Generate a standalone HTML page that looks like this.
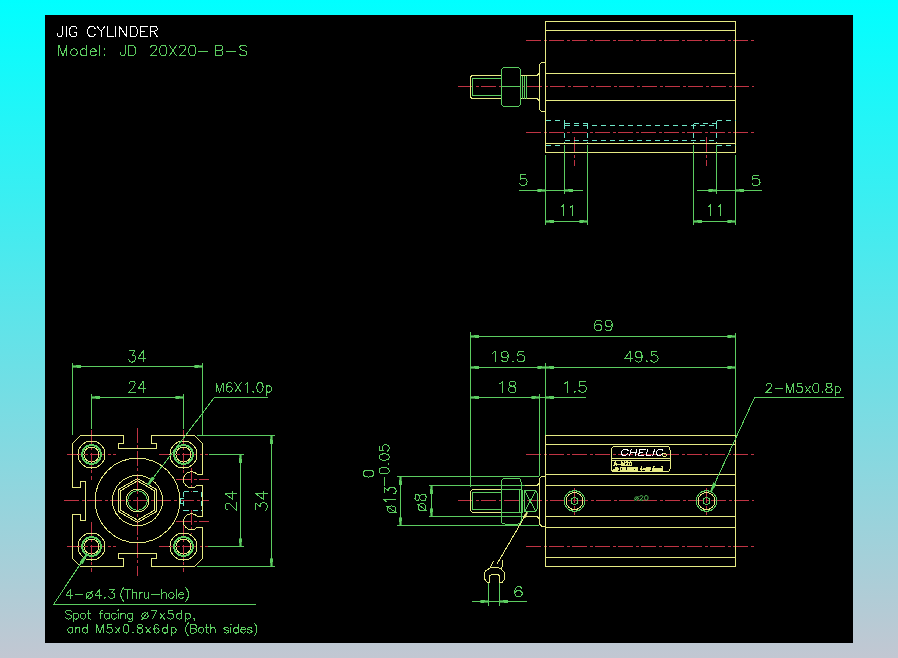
<!DOCTYPE html>
<html><head><meta charset="utf-8"><style>
html,body{margin:0;padding:0;width:898px;height:658px;overflow:hidden}
body{background:linear-gradient(to bottom,rgb(0,255,255) 0%,rgb(194,199,210) 100%)}
svg{position:absolute;left:0;top:0}
text{font-family:"Liberation Sans",sans-serif}
</style></head><body>
<svg width="898" height="658" viewBox="0 0 898 658" shape-rendering="crispEdges">
<rect x="45" y="15" width="808" height="628" fill="#000"/>
<line x1="526" y1="40.5" x2="754" y2="40.5" stroke="#c03444" stroke-dasharray="15 2.5 3 2.5" stroke-dashoffset="0"/>
<line x1="458" y1="86.5" x2="754" y2="86.5" stroke="#c03444" stroke-dasharray="15 2.5 3 2.5" stroke-dashoffset="0"/>
<line x1="526" y1="132.5" x2="754" y2="132.5" stroke="#c03444" stroke-dasharray="15 2.5 3 2.5" stroke-dashoffset="0"/>
<line x1="574.5" y1="137" x2="574.5" y2="166" stroke="#c03444" stroke-dasharray="15 2.5 3 2.5" stroke-dashoffset="0"/>
<line x1="706.5" y1="137" x2="706.5" y2="166" stroke="#c03444" stroke-dasharray="15 2.5 3 2.5" stroke-dashoffset="0"/>
<line x1="526" y1="454.5" x2="754" y2="454.5" stroke="#c03444" stroke-dasharray="15 2.5 3 2.5" stroke-dashoffset="0"/>
<line x1="458" y1="500.5" x2="754" y2="500.5" stroke="#c03444" stroke-dasharray="15 2.5 3 2.5" stroke-dashoffset="0"/>
<line x1="526" y1="546.5" x2="754" y2="546.5" stroke="#c03444" stroke-dasharray="15 2.5 3 2.5" stroke-dashoffset="0"/>
<line x1="574.5" y1="488" x2="574.5" y2="515" stroke="#c03444" stroke-dasharray="15 2.5 3 2.5" stroke-dashoffset="0"/>
<line x1="706.5" y1="488" x2="706.5" y2="515" stroke="#c03444" stroke-dasharray="15 2.5 3 2.5" stroke-dashoffset="0"/>
<line x1="67.0" y1="454.5" x2="116.0" y2="454.5" stroke="#c03444" stroke-dasharray="15 2.5 3 2.5" stroke-dashoffset="0"/>
<line x1="91.5" y1="429.5" x2="91.5" y2="479.5" stroke="#c03444" stroke-dasharray="15 2.5 3 2.5" stroke-dashoffset="0"/>
<line x1="159.0" y1="454.5" x2="208.0" y2="454.5" stroke="#c03444" stroke-dasharray="15 2.5 3 2.5" stroke-dashoffset="0"/>
<line x1="183.5" y1="429.5" x2="183.5" y2="479.5" stroke="#c03444" stroke-dasharray="15 2.5 3 2.5" stroke-dashoffset="0"/>
<line x1="67.0" y1="546.5" x2="116.0" y2="546.5" stroke="#c03444" stroke-dasharray="15 2.5 3 2.5" stroke-dashoffset="0"/>
<line x1="91.5" y1="521.5" x2="91.5" y2="571.5" stroke="#c03444" stroke-dasharray="15 2.5 3 2.5" stroke-dashoffset="0"/>
<line x1="159.0" y1="546.5" x2="208.0" y2="546.5" stroke="#c03444" stroke-dasharray="15 2.5 3 2.5" stroke-dashoffset="0"/>
<line x1="183.5" y1="521.5" x2="183.5" y2="571.5" stroke="#c03444" stroke-dasharray="15 2.5 3 2.5" stroke-dashoffset="0"/>
<line x1="64" y1="500.5" x2="209" y2="500.5" stroke="#c03444" stroke-dasharray="15 2.5 3 2.5" stroke-dashoffset="0"/>
<line x1="137.5" y1="427.7" x2="137.5" y2="575.5" stroke="#c03444" stroke-dasharray="15 2.5 3 2.5" stroke-dashoffset="0"/>
<line x1="176" y1="479.5" x2="209" y2="479.5" stroke="#c03444" stroke-dasharray="15 2.5 3 2.5" stroke-dashoffset="0"/>
<line x1="191.5" y1="467.5" x2="191.5" y2="491.5" stroke="#c03444" stroke-dasharray="15 2.5 3 2.5" stroke-dashoffset="0"/>
<line x1="176" y1="521.5" x2="209" y2="521.5" stroke="#c03444" stroke-dasharray="15 2.5 3 2.5" stroke-dashoffset="0"/>
<line x1="191.5" y1="509.5" x2="191.5" y2="533.5" stroke="#c03444" stroke-dasharray="15 2.5 3 2.5" stroke-dashoffset="0"/>
<path d="M545.5,21.5 H735.5 V152.5 H545.5 Z" stroke="#e6ea84" fill="none"/>
<line x1="545.5" y1="30.5" x2="735.5" y2="30.5" stroke="#e6ea84"/>
<line x1="545.5" y1="73.5" x2="735.5" y2="73.5" stroke="#e6ea84"/>
<line x1="545.5" y1="100.5" x2="735.5" y2="100.5" stroke="#e6ea84"/>
<line x1="545.5" y1="143.5" x2="735.5" y2="143.5" stroke="#e6ea84"/>
<path d="M545.5,62.5 H541.5 L539.5,64.5 V109.5 L541.5,111.5 H545.5" stroke="#e6ea84" fill="none"/>
<path d="M521,75.5 H537 L539.5,73" stroke="#e6ea84" fill="none"/>
<path d="M521,98.5 H537 L539.5,101" stroke="#e6ea84" fill="none"/>
<path d="M501,75.5 H472 L470.5,77 V97 L472,98.5 H501" stroke="#e6ea84" fill="none"/>
<path d="M501,78.5 H472.5 V95.5 H501" stroke="#5ccc60" fill="none"/>
<path d="M505,67.5 H517 Q520.5,67.5 520.5,71 V103 Q520.5,106.5 517,106.5 H505 Q501.5,106.5 501.5,103 V71 Q501.5,67.5 505,67.5 Z" stroke="#5ccc60" fill="none"/>
<line x1="501.5" y1="86.5" x2="520.5" y2="86.5" stroke="#5ccc60"/>
<line x1="522.5" y1="75.5" x2="522.5" y2="98.5" stroke="#5ccc60"/>
<line x1="524.5" y1="75.5" x2="524.5" y2="98.5" stroke="#5ccc60"/>
<line x1="526.5" y1="75.5" x2="526.5" y2="98.5" stroke="#5ccc60"/>
<line x1="545.5" y1="120.5" x2="564.5" y2="120.5" stroke="#6ee6c8" stroke-dasharray="5.5 3.5"/>
<line x1="716.5" y1="120.5" x2="735.5" y2="120.5" stroke="#6ee6c8" stroke-dasharray="5.5 3.5"/>
<line x1="545.5" y1="145.5" x2="564.5" y2="145.5" stroke="#6ee6c8" stroke-dasharray="5.5 3.5"/>
<line x1="716.5" y1="145.5" x2="735.5" y2="145.5" stroke="#6ee6c8" stroke-dasharray="5.5 3.5"/>
<line x1="564.5" y1="120.5" x2="564.5" y2="125.5" stroke="#6ee6c8"/>
<line x1="716.5" y1="120.5" x2="716.5" y2="125.5" stroke="#6ee6c8"/>
<line x1="564.5" y1="123.5" x2="587.5" y2="123.5" stroke="#6ee6c8" stroke-dasharray="5.5 3.5"/>
<line x1="693.5" y1="123.5" x2="716.5" y2="123.5" stroke="#6ee6c8" stroke-dasharray="5.5 3.5"/>
<line x1="564.5" y1="125.5" x2="716.5" y2="125.5" stroke="#6ee6c8" stroke-dasharray="5.5 3.5"/>
<line x1="564.5" y1="140.5" x2="716.5" y2="140.5" stroke="#6ee6c8" stroke-dasharray="5.5 3.5"/>
<line x1="564.5" y1="123.5" x2="564.5" y2="143" stroke="#6ee6c8" stroke-dasharray="5.5 3.5"/>
<line x1="587.5" y1="123.5" x2="587.5" y2="143" stroke="#6ee6c8" stroke-dasharray="5.5 3.5"/>
<line x1="693.5" y1="123.5" x2="693.5" y2="143" stroke="#6ee6c8" stroke-dasharray="5.5 3.5"/>
<line x1="716.5" y1="123.5" x2="716.5" y2="143" stroke="#6ee6c8" stroke-dasharray="5.5 3.5"/>
<line x1="545.5" y1="155" x2="545.5" y2="224.5" stroke="#5ccc60"/>
<line x1="735.5" y1="155" x2="735.5" y2="224.5" stroke="#5ccc60"/>
<line x1="564.5" y1="145" x2="564.5" y2="194" stroke="#5ccc60"/>
<line x1="716.5" y1="145" x2="716.5" y2="194" stroke="#5ccc60"/>
<line x1="587.5" y1="145" x2="587.5" y2="224.5" stroke="#5ccc60"/>
<line x1="693.5" y1="145" x2="693.5" y2="224.5" stroke="#5ccc60"/>
<line x1="519" y1="190.5" x2="583" y2="190.5" stroke="#5ccc60"/>
<path d="M545.50,189.90 L537.50,189.10 L537.50,191.90 L545.50,191.10 Z" fill="#5ccc60" stroke="#5ccc60" stroke-width="0.6"/>
<path d="M564.50,191.10 L572.50,191.90 L572.50,189.10 L564.50,189.90 Z" fill="#5ccc60" stroke="#5ccc60" stroke-width="0.6"/>
<line x1="697" y1="190.5" x2="761.5" y2="190.5" stroke="#5ccc60"/>
<path d="M716.50,189.90 L708.50,189.10 L708.50,191.90 L716.50,191.10 Z" fill="#5ccc60" stroke="#5ccc60" stroke-width="0.6"/>
<path d="M735.50,191.10 L743.50,191.90 L743.50,189.10 L735.50,189.90 Z" fill="#5ccc60" stroke="#5ccc60" stroke-width="0.6"/>
<line x1="545.5" y1="221.5" x2="587.5" y2="221.5" stroke="#5ccc60"/>
<path d="M545.50,222.10 L553.50,222.90 L553.50,220.10 L545.50,220.90 Z" fill="#5ccc60" stroke="#5ccc60" stroke-width="0.6"/>
<path d="M587.50,220.90 L579.50,220.10 L579.50,222.90 L587.50,222.10 Z" fill="#5ccc60" stroke="#5ccc60" stroke-width="0.6"/>
<line x1="693.5" y1="221.5" x2="735.5" y2="221.5" stroke="#5ccc60"/>
<path d="M693.50,222.10 L701.50,222.90 L701.50,220.10 L693.50,220.90 Z" fill="#5ccc60" stroke="#5ccc60" stroke-width="0.6"/>
<path d="M735.50,220.90 L727.50,220.10 L727.50,222.90 L735.50,222.10 Z" fill="#5ccc60" stroke="#5ccc60" stroke-width="0.6"/>
<path d="M525.97,174.50 L520.83,174.50 L520.31,179.21 L520.83,178.69 L522.37,178.17 L523.91,178.17 L525.46,178.69 L526.49,179.74 L527.00,181.31 L527.00,182.36 L526.49,183.93 L525.46,184.98 L523.91,185.50 L522.37,185.50 L520.83,184.98 L520.31,184.45 L519.80,183.40" stroke="#5ccc60" fill="none" stroke-width="1" stroke-linecap="round" stroke-linejoin="round"/>
<path d="M758.86,175.00 L753.14,175.00 L752.57,179.50 L753.14,179.00 L754.86,178.50 L756.57,178.50 L758.29,179.00 L759.43,180.00 L760.00,181.50 L760.00,182.50 L759.43,184.00 L758.29,185.00 L756.57,185.50 L754.86,185.50 L753.14,185.00 L752.57,184.50 L752.00,183.50" stroke="#5ccc60" fill="none" stroke-width="1" stroke-linecap="round" stroke-linejoin="round"/>
<path d="M561.00,207.10 L561.94,206.57 L563.36,205.00 L563.36,216.00 M570.44,207.10 L571.38,206.57 L572.80,205.00 L572.80,216.00" stroke="#5ccc60" fill="none" stroke-width="1" stroke-linecap="round" stroke-linejoin="round"/>
<path d="M708.00,207.10 L709.01,206.57 L710.52,205.00 L710.52,216.00 M718.08,207.10 L719.09,206.57 L720.60,205.00 L720.60,216.00" stroke="#5ccc60" fill="none" stroke-width="1" stroke-linecap="round" stroke-linejoin="round"/>
<path d="M545.5,435.5 H735.5 V566.5 H545.5 Z" stroke="#e6ea84" fill="none"/>
<line x1="545.5" y1="444.5" x2="735.5" y2="444.5" stroke="#e6ea84"/>
<line x1="545.5" y1="474.5" x2="735.5" y2="474.5" stroke="#e6ea84"/>
<line x1="545.5" y1="485.5" x2="735.5" y2="485.5" stroke="#e6ea84"/>
<line x1="545.5" y1="516.5" x2="735.5" y2="516.5" stroke="#e6ea84"/>
<line x1="545.5" y1="527.5" x2="735.5" y2="527.5" stroke="#e6ea84"/>
<line x1="545.5" y1="557.5" x2="735.5" y2="557.5" stroke="#e6ea84"/>
<path d="M614.5,446.5 H667 Q670,446.5 670,449.5 V468.5 Q670,471.5 667,471.5 H614.5 Q611.5,471.5 611.5,468.5 V449.5 Q611.5,446.5 614.5,446.5 Z" stroke="#e6ea84" fill="none"/>
<line x1="611.5" y1="458.5" x2="670" y2="458.5" stroke="#e6ea84"/>
<line x1="611.5" y1="460.5" x2="670" y2="460.5" stroke="#e6ea84"/>
<path d="M545.5,476.5 H541.5 L539.5,478.5 V524 L541.5,526 H545.5" stroke="#e6ea84" fill="none"/>
<path d="M525,485.5 H537 L539.5,483" stroke="#e6ea84" fill="none"/>
<path d="M525,516.5 H537 L539.5,519" stroke="#e6ea84" fill="none"/>
<path d="M501.5,489.5 H472.5 L470.5,491.5 V510.5 L472.5,512.5 H501.5" stroke="#e6ea84" fill="none"/>
<path d="M501.5,492.5 H472.5 V509.5 H501.5" stroke="#5ccc60" fill="none"/>
<path d="M504.5,478.5 H518 Q521,478.5 521,481.5 V521 Q521,524 518,524 H504.5 Q501.5,524 501.5,521 V481.5 Q501.5,478.5 504.5,478.5 Z" stroke="#5ccc60" fill="none"/>
<line x1="501.5" y1="489.5" x2="521" y2="489.5" stroke="#5ccc60"/>
<line x1="501.5" y1="512.5" x2="521" y2="512.5" stroke="#5ccc60"/>
<line x1="519.5" y1="489.5" x2="519.5" y2="512.5" stroke="#5ccc60"/>
<line x1="522.5" y1="489.5" x2="522.5" y2="512.5" stroke="#5ccc60"/>
<path d="M524.5,490.5 H535 Q538,492 538,501 Q538,510 535,511.5 H524.5 Z" stroke="#5ccc60" fill="none"/>
<path d="M524.5,490.5 L536,511.5 M536,490.5 L524.5,511.5" stroke="#5ccc60" fill="none"/>
<circle cx="574.5" cy="501" r="10.3" stroke="#5ccc60" fill="none"/>
<circle cx="574.5" cy="501" r="8.5" stroke="#e6ea84" fill="none"/>
<circle cx="574.5" cy="501" r="3.3" stroke="#5ccc60" fill="none"/>
<circle cx="706.5" cy="501" r="10.3" stroke="#5ccc60" fill="none"/>
<circle cx="706.5" cy="501" r="8.5" stroke="#e6ea84" fill="none"/>
<circle cx="706.5" cy="501" r="3.3" stroke="#5ccc60" fill="none"/>
<line x1="470.5" y1="332" x2="470.5" y2="487" stroke="#5ccc60"/>
<line x1="545.5" y1="363" x2="545.5" y2="435" stroke="#5ccc60"/>
<line x1="539.5" y1="394" x2="539.5" y2="476" stroke="#5ccc60"/>
<line x1="735.5" y1="333" x2="735.5" y2="435" stroke="#5ccc60"/>
<line x1="397" y1="476.5" x2="539" y2="476.5" stroke="#5ccc60"/>
<line x1="397" y1="525.5" x2="539" y2="525.5" stroke="#5ccc60"/>
<line x1="428.5" y1="485.5" x2="525" y2="485.5" stroke="#5ccc60"/>
<line x1="428.5" y1="516.5" x2="525" y2="516.5" stroke="#5ccc60"/>
<line x1="400.5" y1="476.5" x2="400.5" y2="525.5" stroke="#5ccc60"/>
<path d="M399.90,476.50 L399.10,484.50 L401.90,484.50 L401.10,476.50 Z" fill="#5ccc60" stroke="#5ccc60" stroke-width="0.6"/>
<path d="M401.10,525.50 L401.90,517.50 L399.10,517.50 L399.90,525.50 Z" fill="#5ccc60" stroke="#5ccc60" stroke-width="0.6"/>
<line x1="431.5" y1="485.5" x2="431.5" y2="516.5" stroke="#5ccc60"/>
<path d="M430.90,485.50 L430.10,493.50 L432.90,493.50 L432.10,485.50 Z" fill="#5ccc60" stroke="#5ccc60" stroke-width="0.6"/>
<path d="M432.10,516.50 L432.90,508.50 L430.10,508.50 L430.90,516.50 Z" fill="#5ccc60" stroke="#5ccc60" stroke-width="0.6"/>
<line x1="470.5" y1="336.5" x2="735.5" y2="336.5" stroke="#5ccc60"/>
<path d="M470.50,337.10 L478.50,337.90 L478.50,335.10 L470.50,335.90 Z" fill="#5ccc60" stroke="#5ccc60" stroke-width="0.6"/>
<path d="M735.50,335.90 L727.50,335.10 L727.50,337.90 L735.50,337.10 Z" fill="#5ccc60" stroke="#5ccc60" stroke-width="0.6"/>
<line x1="470.5" y1="367.5" x2="735.5" y2="367.5" stroke="#5ccc60"/>
<path d="M470.50,368.10 L478.50,368.90 L478.50,366.10 L470.50,366.90 Z" fill="#5ccc60" stroke="#5ccc60" stroke-width="0.6"/>
<path d="M545.50,366.90 L537.50,366.10 L537.50,368.90 L545.50,368.10 Z" fill="#5ccc60" stroke="#5ccc60" stroke-width="0.6"/>
<path d="M545.50,368.10 L553.50,368.90 L553.50,366.10 L545.50,366.90 Z" fill="#5ccc60" stroke="#5ccc60" stroke-width="0.6"/>
<path d="M735.50,366.90 L727.50,366.10 L727.50,368.90 L735.50,368.10 Z" fill="#5ccc60" stroke="#5ccc60" stroke-width="0.6"/>
<line x1="470.5" y1="397.5" x2="585.5" y2="397.5" stroke="#5ccc60"/>
<path d="M470.50,398.10 L478.50,398.90 L478.50,396.10 L470.50,396.90 Z" fill="#5ccc60" stroke="#5ccc60" stroke-width="0.6"/>
<path d="M539.50,396.90 L531.50,396.10 L531.50,398.90 L539.50,398.10 Z" fill="#5ccc60" stroke="#5ccc60" stroke-width="0.6"/>
<path d="M545.50,398.10 L553.50,398.90 L553.50,396.10 L545.50,396.90 Z" fill="#5ccc60" stroke="#5ccc60" stroke-width="0.6"/>
<path d="M711,491.5 L754.6,397.5 H844" stroke="#5ccc60" fill="none"/>
<path d="M711.54,491.75 L716.24,484.01 L713.34,482.66 L710.46,491.25 Z" fill="#5ccc60" stroke="#5ccc60" stroke-width="0.6"/>
<line x1="488.5" y1="583" x2="488.5" y2="606" stroke="#5ccc60"/>
<line x1="499.5" y1="583" x2="499.5" y2="606" stroke="#5ccc60"/>
<line x1="471.5" y1="601.5" x2="527" y2="601.5" stroke="#5ccc60"/>
<path d="M488.50,600.90 L480.50,600.10 L480.50,602.90 L488.50,602.10 Z" fill="#5ccc60" stroke="#5ccc60" stroke-width="0.6"/>
<path d="M499.50,602.10 L507.50,602.90 L507.50,600.10 L499.50,600.90 Z" fill="#5ccc60" stroke="#5ccc60" stroke-width="0.6"/>
<path d="M497.2,563.7 L527,512.5" stroke="#e6ea84" fill="none"/>
<path d="M526.48,512.20 L522.94,517.08 L525.02,518.29 L527.52,512.80 Z" fill="#e6ea84" stroke="#e6ea84" stroke-width="0.6"/>
<path d="M493.2,561.2 L490.2,568 L485.6,570.7 L484.1,573.1 V578.6 L487.2,582.2 L489.5,582.8 V576.1 L491.4,574.6 H498.1 L499.9,576.1 V582.8 L502.4,582.2 L504.8,578.6 V573.1 L503,570.7 L501.7,569.5 L502.7,560.3 M490.2,568 L492,567.3 H498.1 L501.7,569.5" stroke="#e6ea84" fill="none"/>
<path d="M601.20,321.63 L600.65,320.61 L599.00,320.10 L597.90,320.10 L596.25,320.61 L595.15,322.14 L594.60,324.69 L594.60,327.23 L595.15,329.27 L596.25,330.29 L597.90,330.80 L598.45,330.80 L600.10,330.29 L601.20,329.27 L601.75,327.74 L601.75,327.23 L601.20,325.70 L600.10,324.69 L598.45,324.18 L597.90,324.18 L596.25,324.69 L595.15,325.70 L594.60,327.23 M612.20,323.67 L611.65,325.20 L610.55,326.21 L608.90,326.72 L608.35,326.72 L606.70,326.21 L605.60,325.20 L605.05,323.67 L605.05,323.16 L605.60,321.63 L606.70,320.61 L608.35,320.10 L608.90,320.10 L610.55,320.61 L611.65,321.63 L612.20,323.67 L612.20,326.21 L611.65,328.76 L610.55,330.29 L608.90,330.80 L607.80,330.80 L606.15,330.29 L605.60,329.27" stroke="#5ccc60" fill="none" stroke-width="1" stroke-linecap="round" stroke-linejoin="round"/>
<path d="M492.40,353.30 L493.46,352.80 L495.04,351.30 L495.04,361.80 M508.24,354.80 L507.71,356.30 L506.65,357.30 L505.07,357.80 L504.54,357.80 L502.96,357.30 L501.90,356.30 L501.37,354.80 L501.37,354.30 L501.90,352.80 L502.96,351.80 L504.54,351.30 L505.07,351.30 L506.65,351.80 L507.71,352.80 L508.24,354.80 L508.24,357.30 L507.71,359.80 L506.65,361.30 L505.07,361.80 L504.01,361.80 L502.43,361.30 L501.90,360.30 M512.99,360.80 L512.46,361.30 L512.99,361.80 L513.51,361.30 L512.99,360.80 M523.54,351.30 L518.27,351.30 L517.74,355.80 L518.27,355.30 L519.85,354.80 L521.43,354.80 L523.02,355.30 L524.07,356.30 L524.60,357.80 L524.60,358.80 L524.07,360.30 L523.02,361.30 L521.43,361.80 L519.85,361.80 L518.27,361.30 L517.74,360.80 L517.21,359.80" stroke="#5ccc60" fill="none" stroke-width="1" stroke-linecap="round" stroke-linejoin="round"/>
<path d="M630.16,351.30 L625.00,358.43 L632.73,358.43 M630.16,351.30 L630.16,362.00 M642.02,354.87 L641.50,356.40 L640.47,357.41 L638.92,357.92 L638.41,357.92 L636.86,357.41 L635.83,356.40 L635.31,354.87 L635.31,354.36 L635.83,352.83 L636.86,351.81 L638.41,351.30 L638.92,351.30 L640.47,351.81 L641.50,352.83 L642.02,354.87 L642.02,357.41 L641.50,359.96 L640.47,361.49 L638.92,362.00 L637.89,362.00 L636.34,361.49 L635.83,360.47 M646.66,360.98 L646.14,361.49 L646.66,362.00 L647.17,361.49 L646.66,360.98 M656.97,351.30 L651.81,351.30 L651.30,355.89 L651.81,355.38 L653.36,354.87 L654.91,354.87 L656.45,355.38 L657.48,356.40 L658.00,357.92 L658.00,358.94 L657.48,360.47 L656.45,361.49 L654.91,362.00 L653.36,362.00 L651.81,361.49 L651.30,360.98 L650.78,359.96" stroke="#5ccc60" fill="none" stroke-width="1" stroke-linecap="round" stroke-linejoin="round"/>
<path d="M499.80,383.60 L500.84,383.07 L502.40,381.50 L502.40,392.50 M511.23,381.50 L509.67,382.02 L509.15,383.07 L509.15,384.12 L509.67,385.17 L510.71,385.69 L512.78,386.21 L514.34,386.74 L515.38,387.79 L515.90,388.83 L515.90,390.40 L515.38,391.45 L514.86,391.98 L513.30,392.50 L511.23,392.50 L509.67,391.98 L509.15,391.45 L508.63,390.40 L508.63,388.83 L509.15,387.79 L510.19,386.74 L511.75,386.21 L513.82,385.69 L514.86,385.17 L515.38,384.12 L515.38,383.07 L514.86,382.02 L513.30,381.50 L511.23,381.50" stroke="#5ccc60" fill="none" stroke-width="1" stroke-linecap="round" stroke-linejoin="round"/>
<path d="M564.50,383.64 L565.57,383.13 L567.17,381.60 L567.17,392.30 M574.65,391.28 L574.11,391.79 L574.65,392.30 L575.18,391.79 L574.65,391.28 M585.33,381.60 L579.99,381.60 L579.46,386.19 L579.99,385.68 L581.59,385.17 L583.20,385.17 L584.80,385.68 L585.87,386.70 L586.40,388.22 L586.40,389.24 L585.87,390.77 L584.80,391.79 L583.20,392.30 L581.59,392.30 L579.99,391.79 L579.46,391.28 L578.92,390.26" stroke="#5ccc60" fill="none" stroke-width="1" stroke-linecap="round" stroke-linejoin="round"/>
<path d="M766.24,385.49 L766.24,385.03 L766.68,384.11 L767.12,383.66 L767.99,383.20 L769.75,383.20 L770.63,383.66 L771.07,384.11 L771.50,385.03 L771.50,385.94 L771.07,386.86 L770.19,388.23 L765.80,392.80 L771.94,392.80 M775.02,388.69 L782.91,388.69 M786.42,392.80 L786.42,383.20 L789.94,392.80 L793.45,383.20 L793.45,392.80 M801.78,383.20 L797.40,383.20 L796.96,387.31 L797.40,386.86 L798.71,386.40 L800.03,386.40 L801.34,386.86 L802.22,387.77 L802.66,389.14 L802.66,390.06 L802.22,391.43 L801.34,392.34 L800.03,392.80 L798.71,392.80 L797.40,392.34 L796.96,391.89 L796.52,390.97 M805.29,386.40 L810.12,392.80 M810.12,386.40 L805.29,392.80 M815.39,383.20 L814.07,383.66 L813.19,385.03 L812.75,387.31 L812.75,388.69 L813.19,390.97 L814.07,392.34 L815.39,392.80 L816.26,392.80 L817.58,392.34 L818.46,390.97 L818.90,388.69 L818.90,387.31 L818.46,385.03 L817.58,383.66 L816.26,383.20 L815.39,383.20 M822.41,391.89 L821.97,392.34 L822.41,392.80 L822.85,392.34 L822.41,391.89 M828.11,383.20 L826.80,383.66 L826.36,384.57 L826.36,385.49 L826.80,386.40 L827.67,386.86 L829.43,387.31 L830.75,387.77 L831.62,388.69 L832.06,389.60 L832.06,390.97 L831.62,391.89 L831.18,392.34 L829.87,392.80 L828.11,392.80 L826.80,392.34 L826.36,391.89 L825.92,390.97 L825.92,389.60 L826.36,388.69 L827.24,387.77 L828.55,387.31 L830.31,386.86 L831.18,386.40 L831.62,385.49 L831.62,384.57 L831.18,383.66 L829.87,383.20 L828.11,383.20 M835.13,386.40 L835.13,396.00 M835.13,387.77 L836.01,386.86 L836.89,386.40 L838.21,386.40 L839.08,386.86 L839.96,387.77 L840.40,389.14 L840.40,390.06 L839.96,391.43 L839.08,392.34 L838.21,392.80 L836.89,392.80 L836.01,392.34 L835.13,391.43" stroke="#5ccc60" fill="none" stroke-width="1" stroke-linecap="round" stroke-linejoin="round"/>
<path d="M391.71,505.93 L390.61,506.05 L389.57,506.40 L388.68,506.96 L388.00,507.69 L387.57,508.55 L387.43,509.46 L387.57,510.38 L388.00,511.23 L388.68,511.96 L389.57,512.53 L390.61,512.88 L391.71,513.00 L392.82,512.88 L393.86,512.53 L394.74,511.96 L395.43,511.23 L395.85,510.38 L396.00,509.46 L395.85,508.55 L395.43,507.69 L394.74,506.96 L393.86,506.40 L392.82,506.05 L391.71,505.93 M396.57,512.76 L386.29,506.16 M386.29,501.92 L385.71,500.98 L384.00,499.56 L396.00,499.56 M384.00,492.96 L384.00,487.77 L388.57,490.60 L388.57,489.19 L389.14,488.24 L389.71,487.77 L391.43,487.30 L392.57,487.30 L394.29,487.77 L395.43,488.71 L396.00,490.13 L396.00,491.54 L395.43,492.96 L394.86,493.43 L393.71,493.90" stroke="#5ccc60" fill="none" stroke-width="1" stroke-linecap="round" stroke-linejoin="round"/>
<path d="M384.83,485.40 L384.83,477.17 M379.00,471.22 L379.49,472.60 L380.94,473.51 L383.37,473.97 L384.83,473.97 L387.26,473.51 L388.71,472.60 L389.20,471.22 L389.20,470.31 L388.71,468.94 L387.26,468.02 L384.83,467.57 L383.37,467.57 L380.94,468.02 L379.49,468.94 L379.00,470.31 L379.00,471.22 M388.23,463.91 L388.71,464.36 L389.20,463.91 L388.71,463.45 L388.23,463.91 M379.00,457.50 L379.49,458.88 L380.94,459.79 L383.37,460.25 L384.83,460.25 L387.26,459.79 L388.71,458.88 L389.20,457.50 L389.20,456.59 L388.71,455.22 L387.26,454.30 L384.83,453.85 L383.37,453.85 L380.94,454.30 L379.49,455.22 L379.00,456.59 L379.00,457.50 M379.00,445.61 L379.00,450.19 L383.37,450.64 L382.89,450.19 L382.40,448.82 L382.40,447.44 L382.89,446.07 L383.86,445.16 L385.31,444.70 L386.29,444.70 L387.74,445.16 L388.71,446.07 L389.20,447.44 L389.20,448.82 L388.71,450.19 L388.23,450.64 L387.26,451.10" stroke="#5ccc60" fill="none" stroke-width="1" stroke-linecap="round" stroke-linejoin="round"/>
<path d="M363.40,474.00 L363.89,475.50 L365.36,476.50 L367.81,477.00 L369.29,477.00 L371.74,476.50 L373.21,475.50 L373.70,474.00 L373.70,473.00 L373.21,471.50 L371.74,470.50 L369.29,470.00 L367.81,470.00 L365.36,470.50 L363.89,471.50 L363.40,473.00 L363.40,474.00" stroke="#5ccc60" fill="none" stroke-width="1" stroke-linecap="round" stroke-linejoin="round"/>
<path d="M422.07,503.61 L421.05,503.73 L420.11,504.10 L419.29,504.69 L418.67,505.46 L418.28,506.35 L418.14,507.30 L418.28,508.26 L418.67,509.15 L419.29,509.92 L420.11,510.50 L421.05,510.87 L422.07,511.00 L423.09,510.87 L424.04,510.50 L424.85,509.92 L425.47,509.15 L425.87,508.26 L426.00,507.30 L425.87,506.35 L425.47,505.46 L424.85,504.69 L424.04,504.10 L423.09,503.73 L422.07,503.61 M426.52,510.75 L417.10,503.86 M415.00,498.43 L415.52,499.91 L416.57,500.41 L417.62,500.41 L418.67,499.91 L419.19,498.93 L419.71,496.96 L420.24,495.48 L421.29,494.49 L422.33,494.00 L423.90,494.00 L424.95,494.49 L425.48,494.99 L426.00,496.46 L426.00,498.43 L425.48,499.91 L424.95,500.41 L423.90,500.90 L422.33,500.90 L421.29,500.41 L420.24,499.42 L419.71,497.94 L419.19,495.97 L418.67,494.99 L417.62,494.49 L416.57,494.49 L415.52,494.99 L415.00,496.46 L415.00,498.43" stroke="#5ccc60" fill="none" stroke-width="1" stroke-linecap="round" stroke-linejoin="round"/>
<path d="M521.72,588.11 L521.13,587.17 L519.38,586.70 L518.21,586.70 L516.45,587.17 L515.28,588.59 L514.70,590.94 L514.70,593.30 L515.28,595.19 L516.45,596.13 L518.21,596.60 L518.79,596.60 L520.55,596.13 L521.72,595.19 L522.30,593.77 L522.30,593.30 L521.72,591.89 L520.55,590.94 L518.79,590.47 L518.21,590.47 L516.45,590.94 L515.28,591.89 L514.70,593.30" stroke="#5ccc60" fill="none" stroke-width="1" stroke-linecap="round" stroke-linejoin="round"/>
<path d="M627.03,450.83 L626.63,450.26 L625.82,449.69 L625.02,449.40 L623.41,449.40 L622.61,449.69 L621.80,450.26 L621.40,450.83 L621.00,451.69 L621.00,453.11 L621.40,453.97 L621.80,454.54 L622.61,455.11 L623.41,455.40 L625.02,455.40 L625.82,455.11 L626.63,454.54 L627.03,453.97 M629.84,449.40 L629.84,455.40 M635.47,449.40 L635.47,455.40 M629.84,452.26 L635.47,452.26 M643.91,449.40 L638.69,449.40 L638.69,455.40 L643.91,455.40 M638.69,452.26 L641.90,452.26 M646.32,449.40 L646.32,455.40 L651.15,455.40 M653.16,449.40 L653.16,455.40 M662.00,450.83 L661.60,450.26 L660.79,449.69 L659.99,449.40 L658.38,449.40 L657.58,449.69 L656.77,450.26 L656.37,450.83 L655.97,451.69 L655.97,453.11 L656.37,453.97 L656.77,454.54 L657.58,455.11 L658.38,455.40 L659.99,455.40 L660.79,455.11 L661.60,454.54 L662.00,453.97" stroke="#ffffff" fill="none" stroke-width="1.1" stroke-linecap="round" stroke-linejoin="round" transform="translate(113.39,0) skewX(-14)"/>
<path d="M614.00,465.80 L615.35,462.00 L616.69,465.80 M614.50,464.53 L616.19,464.53 M617.53,464.17 L620.56,464.17 M621.91,465.80 L621.91,462.00 L623.25,465.80 L624.60,462.00 L624.60,465.80 M625.95,462.90 L625.95,462.72 L626.12,462.36 L626.28,462.18 L626.62,462.00 L627.29,462.00 L627.63,462.18 L627.80,462.36 L627.97,462.72 L627.97,463.09 L627.80,463.45 L627.46,463.99 L625.78,465.80 L628.13,465.80 M630.15,462.00 L629.65,462.18 L629.31,462.72 L629.14,463.63 L629.14,464.17 L629.31,465.08 L629.65,465.62 L630.15,465.80 L630.49,465.80 L631.00,465.62 L631.33,465.08 L631.50,464.17 L631.50,463.63 L631.33,462.72 L631.00,462.18 L630.49,462.00 L630.15,462.00" stroke="#e6ea84" fill="none" stroke-width="1.3" stroke-linecap="round" stroke-linejoin="round"/>
<path d="M615.22,467.20 L615.22,469.71 L615.10,470.19 L614.97,470.34 L614.73,470.50 L614.49,470.50 L614.24,470.34 L614.12,470.19 L614.00,469.71 L614.00,469.40 M616.19,467.20 L616.19,470.50 M616.19,467.20 L617.04,467.20 L617.41,467.36 L617.65,467.67 L617.77,467.99 L617.90,468.46 L617.90,469.24 L617.77,469.71 L617.65,470.03 L617.41,470.34 L617.04,470.50 L616.19,470.50 M622.40,467.99 L622.28,467.67 L622.04,467.36 L621.79,467.20 L621.30,467.20 L621.06,467.36 L620.82,467.67 L620.70,467.99 L620.57,468.46 L620.57,469.24 L620.70,469.71 L620.82,470.03 L621.06,470.34 L621.30,470.50 L621.79,470.50 L622.04,470.34 L622.28,470.03 L622.40,469.71 M622.89,467.20 L623.86,468.77 L623.86,470.50 M624.84,467.20 L623.86,468.77 M625.44,467.20 L625.44,470.50 L626.91,470.50 M627.51,467.20 L627.51,470.50 M628.49,470.50 L628.49,467.20 L630.19,470.50 L630.19,467.20 M631.17,467.20 L631.17,470.50 M631.17,467.20 L632.02,467.20 L632.38,467.36 L632.63,467.67 L632.75,467.99 L632.87,468.46 L632.87,469.24 L632.75,469.71 L632.63,470.03 L632.38,470.34 L632.02,470.50 L631.17,470.50 M635.31,467.20 L633.72,467.20 L633.72,470.50 L635.31,470.50 M633.72,468.77 L634.70,468.77 M636.04,470.50 L636.04,467.20 L637.13,467.20 L637.50,467.36 L637.62,467.51 L637.74,467.83 L637.74,468.14 L637.62,468.46 L637.50,468.61 L637.13,468.77 L636.04,468.77 M636.89,468.77 L637.74,470.50 M641.64,467.20 L640.42,469.40 L642.25,469.40 M641.64,467.20 L641.64,470.50 M642.98,469.09 L645.17,469.09 M646.14,467.99 L646.14,467.83 L646.26,467.51 L646.39,467.36 L646.63,467.20 L647.12,467.20 L647.36,467.36 L647.48,467.51 L647.60,467.83 L647.60,468.14 L647.48,468.46 L647.24,468.93 L646.02,470.50 L647.72,470.50 M649.19,467.20 L648.82,467.36 L648.58,467.83 L648.46,468.61 L648.46,469.09 L648.58,469.87 L648.82,470.34 L649.19,470.50 L649.43,470.50 L649.79,470.34 L650.04,469.87 L650.16,469.09 L650.16,468.61 L650.04,467.83 L649.79,467.36 L649.43,467.20 L649.19,467.20 M653.81,466.57 L653.57,466.89 L653.33,467.36 L653.08,467.99 L652.96,468.77 L652.96,469.40 L653.08,470.19 L653.33,470.81 L653.57,471.29 L653.81,471.60 M654.66,468.30 L654.66,470.50 M654.66,468.93 L655.03,468.46 L655.27,468.30 L655.64,468.30 L655.88,468.46 L656.00,468.93 L656.00,470.50 M656.00,468.93 L656.37,468.46 L656.61,468.30 L656.98,468.30 L657.22,468.46 L657.34,468.93 L657.34,470.50 M658.32,468.30 L658.32,470.50 M658.32,468.93 L658.68,468.46 L658.93,468.30 L659.29,468.30 L659.53,468.46 L659.66,468.93 L659.66,470.50 M659.66,468.93 L660.02,468.46 L660.26,468.30 L660.63,468.30 L660.87,468.46 L661.00,468.93 L661.00,470.50 M661.85,466.57 L662.09,466.89 L662.33,467.36 L662.58,467.99 L662.70,468.77 L662.70,469.40 L662.58,470.19 L662.33,470.81 L662.09,471.29 L661.85,471.60" stroke="#e6ea84" fill="none" stroke-width="1.4" stroke-linecap="round" stroke-linejoin="round"/>
<circle cx="664.5" cy="455.2" r="1.8" stroke="#e6ea84" fill="none"/>
<path d="M638.29,498.56 L638.23,498.13 L638.04,497.74 L637.75,497.40 L637.37,497.13 L636.92,496.97 L636.44,496.91 L635.97,496.97 L635.52,497.13 L635.14,497.40 L634.85,497.74 L634.66,498.13 L634.60,498.56 L634.66,498.98 L634.85,499.38 L635.14,499.72 L635.52,499.98 L635.97,500.14 L636.44,500.20 L636.92,500.14 L637.37,499.98 L637.75,499.72 L638.04,499.38 L638.23,498.98 L638.29,498.56 M634.72,500.42 L638.17,496.48 M639.89,496.70 L639.89,496.48 L640.13,496.04 L640.38,495.82 L640.87,495.60 L641.85,495.60 L642.34,495.82 L642.59,496.04 L642.84,496.48 L642.84,496.91 L642.59,497.35 L642.10,498.01 L639.64,500.20 L643.08,500.20 M646.03,495.60 L645.30,495.82 L644.80,496.48 L644.56,497.57 L644.56,498.23 L644.80,499.32 L645.30,499.98 L646.03,500.20 L646.52,500.20 L647.26,499.98 L647.75,499.32 L648.00,498.23 L648.00,497.57 L647.75,496.48 L647.26,495.82 L646.52,495.60 L646.03,495.60" stroke="#5ccc60" fill="none" stroke-width="0.9" stroke-linecap="round" stroke-linejoin="round"/>
<path d="M72.5,443.5 L80.5,435.5 H123.5 V443.5 H118.5 V448.5 H156.5 V443.5 H151.5 V435.5 H194.5 L202.5,443.5 V474 H197 A8,8 0 1,0 197,485.5 H202.5 V516 H197 A8,8 0 1,0 197,527.5 H202.5 V558.5 L194.5,566.5 H151.5 V558.5 H156.5 V553.5 H118.5 V558.5 H123.5 V566.5 H80.5 L72.5,558.5 V514.5 H80.5 V520.5 H85.5 V481.5 H80.5 V487.5 H72.5 Z" stroke="#e6ea84" fill="none"/>
<circle cx="91.5" cy="454.5" r="13.5" stroke="#e6ea84" fill="none"/>
<circle cx="91.5" cy="454.5" r="9" stroke="#5ccc60" fill="none"/>
<circle cx="91.5" cy="454.5" r="10" stroke="#5ccc60" fill="none"/>
<circle cx="91.5" cy="454.5" r="7.5" stroke="#e6ea84" fill="none"/>
<circle cx="183.5" cy="454.5" r="13.5" stroke="#e6ea84" fill="none"/>
<circle cx="183.5" cy="454.5" r="9" stroke="#5ccc60" fill="none"/>
<circle cx="183.5" cy="454.5" r="10" stroke="#5ccc60" fill="none"/>
<circle cx="183.5" cy="454.5" r="7.5" stroke="#e6ea84" fill="none"/>
<circle cx="91.5" cy="546.5" r="13.5" stroke="#e6ea84" fill="none"/>
<circle cx="91.5" cy="546.5" r="9" stroke="#5ccc60" fill="none"/>
<circle cx="91.5" cy="546.5" r="10" stroke="#5ccc60" fill="none"/>
<circle cx="91.5" cy="546.5" r="7.5" stroke="#e6ea84" fill="none"/>
<circle cx="183.5" cy="546.5" r="13.5" stroke="#e6ea84" fill="none"/>
<circle cx="183.5" cy="546.5" r="9" stroke="#5ccc60" fill="none"/>
<circle cx="183.5" cy="546.5" r="10" stroke="#5ccc60" fill="none"/>
<circle cx="183.5" cy="546.5" r="7.5" stroke="#e6ea84" fill="none"/>
<circle cx="137.5" cy="500.5" r="42.3" stroke="#e6ea84" fill="none"/>
<circle cx="137.5" cy="500.5" r="25" stroke="#e6ea84" fill="none"/>
<path d="M137.50,522.44 L118.50,511.47 L118.50,489.53 L137.50,478.56 L156.50,489.53 L156.50,511.47 Z" stroke="#e6ea84" fill="none"/>
<path d="M137.50,520.13 L120.50,510.31 L120.50,490.69 L137.50,480.87 L154.50,490.69 L154.50,510.31 Z" stroke="#e6ea84" fill="none"/>
<circle cx="137.5" cy="500.5" r="11.4" stroke="#e6ea84" fill="none"/>
<circle cx="137.5" cy="500.5" r="9.8" stroke="#5ccc60" fill="none"/>
<line x1="183.5" y1="491.5" x2="201.5" y2="491.5" stroke="#6ee6c8" stroke-dasharray="5.5 3.5"/>
<line x1="183.5" y1="510.5" x2="201.5" y2="510.5" stroke="#6ee6c8" stroke-dasharray="5.5 3.5"/>
<line x1="183.5" y1="491.5" x2="183.5" y2="510.5" stroke="#6ee6c8" stroke-dasharray="5.5 3.5"/>
<line x1="201.5" y1="491.5" x2="201.5" y2="510.5" stroke="#6ee6c8" stroke-dasharray="5.5 3.5"/>
<path d="M183.5,498.5 H180.5 V503.5 H183.5" stroke="#6ee6c8" fill="none"/>
<line x1="72.5" y1="363" x2="72.5" y2="435" stroke="#5ccc60"/>
<line x1="202.5" y1="363" x2="202.5" y2="435" stroke="#5ccc60"/>
<line x1="72.5" y1="366.5" x2="202.5" y2="366.5" stroke="#5ccc60"/>
<path d="M72.50,367.10 L80.50,367.90 L80.50,365.10 L72.50,365.90 Z" fill="#5ccc60" stroke="#5ccc60" stroke-width="0.6"/>
<path d="M202.50,365.90 L194.50,365.10 L194.50,367.90 L202.50,367.10 Z" fill="#5ccc60" stroke="#5ccc60" stroke-width="0.6"/>
<line x1="91.5" y1="394" x2="91.5" y2="429" stroke="#5ccc60"/>
<line x1="183.5" y1="394" x2="183.5" y2="429" stroke="#5ccc60"/>
<line x1="91.5" y1="397.5" x2="183.5" y2="397.5" stroke="#5ccc60"/>
<path d="M91.50,398.10 L99.50,398.90 L99.50,396.10 L91.50,396.90 Z" fill="#5ccc60" stroke="#5ccc60" stroke-width="0.6"/>
<path d="M183.50,396.90 L175.50,396.10 L175.50,398.90 L183.50,398.10 Z" fill="#5ccc60" stroke="#5ccc60" stroke-width="0.6"/>
<line x1="197" y1="435.5" x2="275.2" y2="435.5" stroke="#5ccc60"/>
<line x1="197" y1="566.5" x2="275.2" y2="566.5" stroke="#5ccc60"/>
<line x1="271.5" y1="435.5" x2="271.5" y2="566.5" stroke="#5ccc60"/>
<path d="M270.90,435.50 L270.10,443.50 L272.90,443.50 L272.10,435.50 Z" fill="#5ccc60" stroke="#5ccc60" stroke-width="0.6"/>
<path d="M272.10,566.50 L272.90,558.50 L270.10,558.50 L270.90,566.50 Z" fill="#5ccc60" stroke="#5ccc60" stroke-width="0.6"/>
<line x1="209" y1="454.5" x2="244.4" y2="454.5" stroke="#5ccc60"/>
<line x1="208" y1="546.5" x2="244.4" y2="546.5" stroke="#5ccc60"/>
<line x1="240.5" y1="454.5" x2="240.5" y2="546.5" stroke="#5ccc60"/>
<path d="M239.90,454.50 L239.10,462.50 L241.90,462.50 L241.10,454.50 Z" fill="#5ccc60" stroke="#5ccc60" stroke-width="0.6"/>
<path d="M241.10,546.50 L241.90,538.50 L239.10,538.50 L239.90,546.50 Z" fill="#5ccc60" stroke="#5ccc60" stroke-width="0.6"/>
<path d="M147.8,485 L214.4,397.5 H268" stroke="#5ccc60" fill="none"/>
<path d="M148.28,485.36 L154.52,478.81 L151.98,476.87 L147.32,484.64 Z" fill="#5ccc60" stroke="#5ccc60" stroke-width="0.6"/>
<path d="M86,555.5 L53.5,604.5 H255.6" stroke="#5ccc60" fill="none"/>
<path d="M85.50,555.17 L79.69,562.12 L82.36,563.88 L86.50,555.83 Z" fill="#5ccc60" stroke="#5ccc60" stroke-width="0.6"/>
<path d="M129.75,350.80 L135.00,350.80 L132.14,355.07 L133.57,355.07 L134.53,355.60 L135.00,356.13 L135.48,357.73 L135.48,358.80 L135.00,360.40 L134.05,361.47 L132.62,362.00 L131.19,362.00 L129.75,361.47 L129.28,360.93 L128.80,359.87 M143.11,350.80 L138.34,358.27 L145.50,358.27 M143.11,350.80 L143.11,362.00" stroke="#5ccc60" fill="none" stroke-width="1" stroke-linecap="round" stroke-linejoin="round"/>
<path d="M129.28,383.76 L129.28,383.21 L129.75,382.10 L130.23,381.55 L131.19,381.00 L133.09,381.00 L134.05,381.55 L134.53,382.10 L135.00,383.21 L135.00,384.31 L134.53,385.42 L133.57,387.08 L128.80,392.60 L135.48,392.60 M143.11,381.00 L138.34,388.73 L145.50,388.73 M143.11,381.00 L143.11,392.60" stroke="#5ccc60" fill="none" stroke-width="1" stroke-linecap="round" stroke-linejoin="round"/>
<path d="M216.00,392.20 L216.00,382.60 L219.52,392.20 L223.03,382.60 L223.03,392.20 M231.83,383.97 L231.39,383.06 L230.07,382.60 L229.19,382.60 L227.87,383.06 L226.99,384.43 L226.55,386.71 L226.55,389.00 L226.99,390.83 L227.87,391.74 L229.19,392.20 L229.63,392.20 L230.95,391.74 L231.83,390.83 L232.27,389.46 L232.27,389.00 L231.83,387.63 L230.95,386.71 L229.63,386.26 L229.19,386.26 L227.87,386.71 L226.99,387.63 L226.55,389.00 M234.91,382.60 L241.06,392.20 M241.06,382.60 L234.91,392.20 M245.02,384.43 L245.90,383.97 L247.22,382.60 L247.22,392.20 M253.37,391.29 L252.93,391.74 L253.37,392.20 L253.81,391.74 L253.37,391.29 M259.53,382.60 L258.21,383.06 L257.33,384.43 L256.89,386.71 L256.89,388.09 L257.33,390.37 L258.21,391.74 L259.53,392.20 L260.41,392.20 L261.73,391.74 L262.61,390.37 L263.05,388.09 L263.05,386.71 L262.61,384.43 L261.73,383.06 L260.41,382.60 L259.53,382.60 M266.12,385.80 L266.12,395.40 M266.12,387.17 L267.00,386.26 L267.88,385.80 L269.20,385.80 L270.08,386.26 L270.96,387.17 L271.40,388.54 L271.40,389.46 L270.96,390.83 L270.08,391.74 L269.20,392.20 L267.88,392.20 L267.00,391.74 L266.12,390.83" stroke="#5ccc60" fill="none" stroke-width="1" stroke-linecap="round" stroke-linejoin="round"/>
<path d="M227.74,509.85 L227.19,509.85 L226.10,509.29 L225.55,508.74 L225.00,507.63 L225.00,505.41 L225.55,504.30 L226.10,503.75 L227.19,503.19 L228.29,503.19 L229.38,503.75 L231.02,504.86 L236.50,510.40 L236.50,502.64 M225.00,493.77 L232.67,499.31 L232.67,491.00 M225.00,493.77 L236.50,493.77" stroke="#5ccc60" fill="none" stroke-width="1" stroke-linecap="round" stroke-linejoin="round"/>
<path d="M255.80,509.29 L255.80,503.19 L260.14,506.52 L260.14,504.86 L260.69,503.75 L261.23,503.19 L262.86,502.64 L263.94,502.64 L265.57,503.19 L266.66,504.30 L267.20,505.97 L267.20,507.63 L266.66,509.29 L266.11,509.85 L265.03,510.40 M255.80,493.77 L263.40,499.31 L263.40,491.00 M255.80,493.77 L267.20,493.77" stroke="#5ccc60" fill="none" stroke-width="1" stroke-linecap="round" stroke-linejoin="round"/>
<path d="M70.19,589.50 L66.00,595.37 L72.29,595.37 M70.19,589.50 L70.19,598.30 M75.32,594.53 L82.86,594.53 M92.39,595.16 L92.29,594.34 L91.97,593.59 L91.47,592.93 L90.82,592.44 L90.06,592.12 L89.25,592.01 L88.44,592.12 L87.68,592.44 L87.03,592.93 L86.53,593.59 L86.22,594.34 L86.11,595.16 L86.22,595.97 L86.53,596.73 L87.03,597.38 L87.68,597.88 L88.44,598.19 L89.25,598.30 L90.06,598.19 L90.82,597.88 L91.47,597.38 L91.97,596.73 L92.29,595.97 L92.39,595.16 M86.32,598.72 L92.18,591.18 M99.41,589.50 L95.22,595.37 L101.51,595.37 M99.41,589.50 L99.41,598.30 M104.96,597.46 L104.54,597.88 L104.96,598.30 L105.38,597.88 L104.96,597.46 M109.67,589.50 L114.28,589.50 L111.77,592.85 L113.02,592.85 L113.86,593.27 L114.28,593.69 L114.70,594.95 L114.70,595.79 L114.28,597.04 L113.44,597.88 L112.19,598.30 L110.93,598.30 L109.67,597.88 L109.25,597.46 L108.83,596.62" stroke="#5ccc60" fill="none" stroke-width="1" stroke-linecap="round" stroke-linejoin="round"/>
<path d="M123.73,587.82 L122.90,588.66 L122.06,589.92 L121.22,591.60 L120.80,593.69 L120.80,595.37 L121.22,597.46 L122.06,599.14 L122.90,600.40 L123.73,601.23 M127.70,589.50 L127.70,598.30 M124.76,589.50 L130.63,589.50 M132.08,589.50 L132.08,598.30 M132.08,594.11 L133.33,592.85 L134.17,592.43 L135.43,592.43 L136.27,592.85 L136.69,594.11 L136.69,598.30 M139.39,592.43 L139.39,598.30 M139.39,594.95 L139.81,593.69 L140.65,592.85 L141.49,592.43 L142.74,592.43 M144.19,592.43 L144.19,596.62 L144.61,597.88 L145.45,598.30 L146.71,598.30 L147.54,597.88 L148.80,596.62 M148.80,592.43 L148.80,598.30 M151.51,594.53 L159.05,594.53 M161.76,589.50 L161.76,598.30 M161.76,594.11 L163.01,592.85 L163.85,592.43 L165.11,592.43 L165.95,592.85 L166.36,594.11 L166.36,598.30 M170.75,592.43 L169.91,592.85 L169.07,593.69 L168.65,594.95 L168.65,595.79 L169.07,597.04 L169.91,597.88 L170.75,598.30 L172.00,598.30 L172.84,597.88 L173.68,597.04 L174.10,595.79 L174.10,594.95 L173.68,593.69 L172.84,592.85 L172.00,592.43 L170.75,592.43 M176.38,589.50 L176.38,598.30 M178.67,594.95 L183.70,594.95 L183.70,594.11 L183.28,593.27 L182.86,592.85 L182.02,592.43 L180.77,592.43 L179.93,592.85 L179.09,593.69 L178.67,594.95 L178.67,595.79 L179.09,597.04 L179.93,597.88 L180.77,598.30 L182.02,598.30 L182.86,597.88 L183.70,597.04 M185.57,587.82 L186.40,588.66 L187.24,589.92 L188.08,591.60 L188.50,593.69 L188.50,595.37 L188.08,597.46 L187.24,599.14 L186.40,600.40 L185.57,601.23" stroke="#5ccc60" fill="none" stroke-width="1" stroke-linecap="round" stroke-linejoin="round"/>
<path d="M71.47,611.46 L70.63,610.62 L69.37,610.20 L67.70,610.20 L66.44,610.62 L65.60,611.46 L65.60,612.30 L66.02,613.13 L66.44,613.55 L67.28,613.97 L69.79,614.81 L70.63,615.23 L71.05,615.65 L71.47,616.49 L71.47,617.74 L70.63,618.58 L69.37,619.00 L67.70,619.00 L66.44,618.58 L65.60,617.74 M73.65,613.13 L73.65,621.93 M73.65,614.39 L74.49,613.55 L75.33,613.13 L76.59,613.13 L77.43,613.55 L78.26,614.39 L78.68,615.65 L78.68,616.49 L78.26,617.74 L77.43,618.58 L76.59,619.00 L75.33,619.00 L74.49,618.58 L73.65,617.74 M82.55,613.13 L81.71,613.55 L80.87,614.39 L80.45,615.65 L80.45,616.49 L80.87,617.74 L81.71,618.58 L82.55,619.00 L83.80,619.00 L84.64,618.58 L85.48,617.74 L85.90,616.49 L85.90,615.65 L85.48,614.39 L84.64,613.55 L83.80,613.13 L82.55,613.13 M88.50,610.20 L88.50,617.32 L88.92,618.58 L89.76,619.00 L90.60,619.00 M87.25,613.13 L90.18,613.13" stroke="#5ccc60" fill="none" stroke-width="1" stroke-linecap="round" stroke-linejoin="round"/>
<path d="M102.85,610.20 L102.01,610.20 L101.18,610.62 L100.76,611.88 L100.76,619.00 M99.50,613.13 L102.43,613.13 M109.10,613.13 L109.10,619.00 M109.10,614.39 L108.26,613.55 L107.42,613.13 L106.16,613.13 L105.33,613.55 L104.49,614.39 L104.07,615.65 L104.07,616.49 L104.49,617.74 L105.33,618.58 L106.16,619.00 L107.42,619.00 L108.26,618.58 L109.10,617.74 M116.18,614.39 L115.34,613.55 L114.50,613.13 L113.25,613.13 L112.41,613.55 L111.57,614.39 L111.15,615.65 L111.15,616.49 L111.57,617.74 L112.41,618.58 L113.25,619.00 L114.50,619.00 L115.34,618.58 L116.18,617.74 M117.82,610.20 L118.23,610.62 L118.65,610.20 L118.23,609.78 L117.82,610.20 M118.23,613.13 L118.23,619.00 M120.71,613.13 L120.71,619.00 M120.71,614.81 L121.96,613.55 L122.80,613.13 L124.06,613.13 L124.90,613.55 L125.32,614.81 L125.32,619.00 M132.40,613.13 L132.40,619.84 L131.98,621.10 L131.56,621.51 L130.72,621.93 L129.47,621.93 L128.63,621.51 L127.79,621.10 M132.40,614.39 L131.56,613.55 L130.72,613.13 L129.47,613.13 L128.63,613.55 L127.79,614.39 L127.37,615.65 L127.37,616.49 L127.79,617.74 L128.63,618.58 L129.47,619.00 L130.72,619.00 L131.56,618.58 L132.40,617.74" stroke="#5ccc60" fill="none" stroke-width="1" stroke-linecap="round" stroke-linejoin="round"/>
<path d="M148.09,615.86 L147.98,615.04 L147.66,614.29 L147.17,613.63 L146.51,613.14 L145.76,612.82 L144.94,612.71 L144.13,612.82 L143.37,613.14 L142.72,613.63 L142.22,614.29 L141.91,615.04 L141.80,615.86 L141.91,616.67 L142.22,617.43 L142.72,618.08 L143.37,618.58 L144.13,618.89 L144.94,619.00 L145.76,618.89 L146.51,618.58 L147.17,618.08 L147.66,617.43 L147.98,616.67 L148.09,615.86 M142.01,619.42 L147.88,611.88 M150.95,610.20 L156.81,610.20 L152.62,619.00 M159.89,613.13 L164.50,619.00 M164.50,613.13 L159.89,619.00 M172.60,610.20 L168.40,610.20 L167.99,613.97 L168.40,613.55 L169.66,613.13 L170.92,613.13 L172.18,613.55 L173.01,614.39 L173.43,615.65 L173.43,616.49 L173.01,617.74 L172.18,618.58 L170.92,619.00 L169.66,619.00 L168.40,618.58 L167.99,618.16 L167.57,617.32 M181.53,610.20 L181.53,619.00 M181.53,614.39 L180.70,613.55 L179.86,613.13 L178.60,613.13 L177.76,613.55 L176.92,614.39 L176.50,615.65 L176.50,616.49 L176.92,617.74 L177.76,618.58 L178.60,619.00 L179.86,619.00 L180.70,618.58 L181.53,617.74 M185.44,613.13 L185.44,621.93 M185.44,614.39 L186.28,613.55 L187.12,613.13 L188.38,613.13 L189.21,613.55 L190.05,614.39 L190.47,615.65 L190.47,616.49 L190.05,617.74 L189.21,618.58 L188.38,619.00 L187.12,619.00 L186.28,618.58 L185.44,617.74 M194.80,618.58 L194.38,619.00 L193.96,618.58 L194.38,618.16 L194.80,618.58 L194.80,619.42 L194.38,620.26 L193.96,620.68" stroke="#5ccc60" fill="none" stroke-width="1" stroke-linecap="round" stroke-linejoin="round"/>
<path d="M72.60,627.40 L72.60,633.00 M72.60,628.60 L71.80,627.80 L71.00,627.40 L69.80,627.40 L69.00,627.80 L68.20,628.60 L67.80,629.80 L67.80,630.60 L68.20,631.80 L69.00,632.60 L69.80,633.00 L71.00,633.00 L71.80,632.60 L72.60,631.80 M75.55,627.40 L75.55,633.00 M75.55,629.00 L76.75,627.80 L77.55,627.40 L78.75,627.40 L79.55,627.80 L79.95,629.00 L79.95,633.00 M87.30,624.60 L87.30,633.00 M87.30,628.60 L86.50,627.80 L85.70,627.40 L84.50,627.40 L83.70,627.80 L82.90,628.60 L82.50,629.80 L82.50,630.60 L82.90,631.80 L83.70,632.60 L84.50,633.00 L85.70,633.00 L86.50,632.60 L87.30,631.80" stroke="#5ccc60" fill="none" stroke-width="1" stroke-linecap="round" stroke-linejoin="round"/>
<path d="M96.70,633.00 L96.70,624.60 L99.90,633.00 L103.10,624.60 L103.10,633.00 M111.57,624.60 L107.57,624.60 L107.17,628.20 L107.57,627.80 L108.77,627.40 L109.97,627.40 L111.17,627.80 L111.97,628.60 L112.37,629.80 L112.37,630.60 L111.97,631.80 L111.17,632.60 L109.97,633.00 L108.77,633.00 L107.57,632.60 L107.17,632.20 L106.77,631.40 M115.63,627.40 L120.03,633.00 M120.03,627.40 L115.63,633.00 M125.70,624.60 L124.50,625.00 L123.70,626.20 L123.30,628.20 L123.30,629.40 L123.70,631.40 L124.50,632.60 L125.70,633.00 L126.50,633.00 L127.70,632.60 L128.50,631.40 L128.90,629.40 L128.90,628.20 L128.50,626.20 L127.70,625.00 L126.50,624.60 L125.70,624.60 M132.97,632.20 L132.57,632.60 L132.97,633.00 L133.37,632.60 L132.97,632.20 M139.03,624.60 L137.83,625.00 L137.43,625.80 L137.43,626.60 L137.83,627.40 L138.63,627.80 L140.23,628.20 L141.43,628.60 L142.23,629.40 L142.63,630.20 L142.63,631.40 L142.23,632.20 L141.83,632.60 L140.63,633.00 L139.03,633.00 L137.83,632.60 L137.43,632.20 L137.03,631.40 L137.03,630.20 L137.43,629.40 L138.23,628.60 L139.43,628.20 L141.03,627.80 L141.83,627.40 L142.23,626.60 L142.23,625.80 L141.83,625.00 L140.63,624.60 L139.03,624.60 M145.90,627.40 L150.30,633.00 M150.30,627.40 L145.90,633.00 M158.77,625.80 L158.37,625.00 L157.17,624.60 L156.37,624.60 L155.17,625.00 L154.37,626.20 L153.97,628.20 L153.97,630.20 L154.37,631.80 L155.17,632.60 L156.37,633.00 L156.77,633.00 L157.97,632.60 L158.77,631.80 L159.17,630.60 L159.17,630.20 L158.77,629.00 L157.97,628.20 L156.77,627.80 L156.37,627.80 L155.17,628.20 L154.37,629.00 L153.97,630.20 M167.23,624.60 L167.23,633.00 M167.23,628.60 L166.43,627.80 L165.63,627.40 L164.43,627.40 L163.63,627.80 L162.83,628.60 L162.43,629.80 L162.43,630.60 L162.83,631.80 L163.63,632.60 L164.43,633.00 L165.63,633.00 L166.43,632.60 L167.23,631.80 M171.30,627.40 L171.30,635.80 M171.30,628.60 L172.10,627.80 L172.90,627.40 L174.10,627.40 L174.90,627.80 L175.70,628.60 L176.10,629.80 L176.10,630.60 L175.70,631.80 L174.90,632.60 L174.10,633.00 L172.90,633.00 L172.10,632.60 L171.30,631.80" stroke="#5ccc60" fill="none" stroke-width="1" stroke-linecap="round" stroke-linejoin="round"/>
<path d="M188.40,623.00 L187.60,623.80 L186.80,625.00 L186.00,626.60 L185.60,628.60 L185.60,630.20 L186.00,632.20 L186.80,633.80 L187.60,635.00 L188.40,635.80 M190.88,624.60 L190.88,633.00 M190.88,624.60 L194.47,624.60 L195.67,625.00 L196.07,625.40 L196.47,626.20 L196.47,627.00 L196.07,627.80 L195.67,628.20 L194.47,628.60 M190.88,628.60 L194.47,628.60 L195.67,629.00 L196.07,629.40 L196.47,630.20 L196.47,631.40 L196.07,632.20 L195.67,632.60 L194.47,633.00 L190.88,633.00 M200.55,627.40 L199.75,627.80 L198.95,628.60 L198.55,629.80 L198.55,630.60 L198.95,631.80 L199.75,632.60 L200.55,633.00 L201.75,633.00 L202.55,632.60 L203.35,631.80 L203.75,630.60 L203.75,629.80 L203.35,628.60 L202.55,627.80 L201.75,627.40 L200.55,627.40 M206.62,624.60 L206.62,631.40 L207.03,632.60 L207.82,633.00 L208.62,633.00 M205.43,627.40 L208.22,627.40 M210.70,624.60 L210.70,633.00 M210.70,629.00 L211.90,627.80 L212.70,627.40 L213.90,627.40 L214.70,627.80 L215.10,629.00 L215.10,633.00" stroke="#5ccc60" fill="none" stroke-width="1" stroke-linecap="round" stroke-linejoin="round"/>
<path d="M228.40,628.60 L228.00,627.80 L226.80,627.40 L225.60,627.40 L224.40,627.80 L224.00,628.60 L224.40,629.40 L225.20,629.80 L227.20,630.20 L228.00,630.60 L228.40,631.40 L228.40,631.80 L228.00,632.60 L226.80,633.00 L225.60,633.00 L224.40,632.60 L224.00,631.80 M230.50,624.60 L230.90,625.00 L231.30,624.60 L230.90,624.20 L230.50,624.60 M230.90,627.40 L230.90,633.00 M238.20,624.60 L238.20,633.00 M238.20,628.60 L237.40,627.80 L236.60,627.40 L235.40,627.40 L234.60,627.80 L233.80,628.60 L233.40,629.80 L233.40,630.60 L233.80,631.80 L234.60,632.60 L235.40,633.00 L236.60,633.00 L237.40,632.60 L238.20,631.80 M240.70,629.80 L245.50,629.80 L245.50,629.00 L245.10,628.20 L244.70,627.80 L243.90,627.40 L242.70,627.40 L241.90,627.80 L241.10,628.60 L240.70,629.80 L240.70,630.60 L241.10,631.80 L241.90,632.60 L242.70,633.00 L243.90,633.00 L244.70,632.60 L245.50,631.80 M252.00,628.60 L251.60,627.80 L250.40,627.40 L249.20,627.40 L248.00,627.80 L247.60,628.60 L248.00,629.40 L248.80,629.80 L250.80,630.20 L251.60,630.60 L252.00,631.40 L252.00,631.80 L251.60,632.60 L250.40,633.00 L249.20,633.00 L248.00,632.60 L247.60,631.80 M254.10,623.00 L254.90,623.80 L255.70,625.00 L256.50,626.60 L256.90,628.60 L256.90,630.20 L256.50,632.20 L255.70,633.80 L254.90,635.00 L254.10,635.80" stroke="#5ccc60" fill="none" stroke-width="1" stroke-linecap="round" stroke-linejoin="round"/>
<path d="M62.25,26.20 L62.25,34.28 L61.74,35.79 L61.24,36.30 L60.23,36.80 L59.22,36.80 L58.21,36.30 L57.70,35.79 L57.20,34.28 L57.20,33.27 M66.06,26.20 L66.06,36.80 M76.94,28.72 L76.44,27.71 L75.43,26.70 L74.42,26.20 L72.40,26.20 L71.39,26.70 L70.38,27.71 L69.88,28.72 L69.37,30.24 L69.37,32.76 L69.88,34.28 L70.38,35.29 L71.39,36.30 L72.40,36.80 L74.42,36.80 L75.43,36.30 L76.44,35.29 L76.94,34.28 L76.94,32.76 L74.42,32.76 M95.17,28.72 L94.66,27.71 L93.66,26.70 L92.65,26.20 L90.63,26.20 L89.62,26.70 L88.61,27.71 L88.10,28.72 L87.60,30.24 L87.60,32.76 L88.10,34.28 L88.61,35.29 L89.62,36.30 L90.63,36.80 L92.65,36.80 L93.66,36.30 L94.66,35.29 L95.17,34.28 M96.96,26.20 L101.00,31.25 L101.00,36.80 M105.04,26.20 L101.00,31.25 M107.34,26.20 L107.34,36.80 L113.40,36.80 M115.70,26.20 L115.70,36.80 M119.51,36.80 L119.51,26.20 L126.58,36.80 L126.58,26.20 M130.39,26.20 L130.39,36.80 M130.39,26.20 L133.92,26.20 L135.44,26.70 L136.45,27.71 L136.95,28.72 L137.46,30.24 L137.46,32.76 L136.95,34.28 L136.45,35.29 L135.44,36.30 L133.92,36.80 L130.39,36.80 M147.33,26.20 L140.77,26.20 L140.77,36.80 L147.33,36.80 M140.77,31.25 L144.81,31.25 M150.13,36.80 L150.13,26.20 L154.68,26.20 L156.19,26.70 L156.70,27.21 L157.20,28.22 L157.20,29.23 L156.70,30.24 L156.19,30.74 L154.68,31.25 L150.13,31.25 M153.67,31.25 L157.20,36.80" stroke="#ffffff" fill="none" stroke-width="1" stroke-linecap="round" stroke-linejoin="round"/>
<path d="M58.90,55.90 L58.90,45.30 L62.94,55.90 L66.98,45.30 L66.98,55.90 M73.17,48.83 L72.16,49.34 L71.15,50.35 L70.64,51.86 L70.64,52.87 L71.15,54.39 L72.16,55.40 L73.17,55.90 L74.68,55.90 L75.69,55.40 L76.70,54.39 L77.21,52.87 L77.21,51.86 L76.70,50.35 L75.69,49.34 L74.68,48.83 L73.17,48.83 M86.43,45.30 L86.43,55.90 M86.43,50.35 L85.42,49.34 L84.41,48.83 L82.89,48.83 L81.88,49.34 L80.87,50.35 L80.37,51.86 L80.37,52.87 L80.87,54.39 L81.88,55.40 L82.89,55.90 L84.41,55.90 L85.42,55.40 L86.43,54.39 M90.09,51.86 L96.15,51.86 L96.15,50.85 L95.65,49.84 L95.14,49.34 L94.13,48.83 L92.62,48.83 L91.61,49.34 L90.60,50.35 L90.09,51.86 L90.09,52.87 L90.60,54.39 L91.61,55.40 L92.62,55.90 L94.13,55.90 L95.14,55.40 L96.15,54.39 M99.82,45.30 L99.82,55.90 M104.50,48.83 L103.99,49.34 L104.50,49.84 L105.00,49.34 L104.50,48.83 M104.50,54.89 L103.99,55.40 L104.50,55.90 L105.00,55.40 L104.50,54.89" stroke="#5ccc60" fill="none" stroke-width="1" stroke-linecap="round" stroke-linejoin="round"/>
<path d="M125.15,45.30 L125.15,53.38 L124.64,54.89 L124.14,55.40 L123.13,55.90 L122.12,55.90 L121.11,55.40 L120.60,54.89 L120.10,53.38 L120.10,52.37 M128.63,45.30 L128.63,55.90 M128.63,45.30 L132.17,45.30 L133.68,45.80 L134.69,46.81 L135.20,47.82 L135.70,49.34 L135.70,51.86 L135.20,53.38 L134.69,54.39 L133.68,55.40 L132.17,55.90 L128.63,55.90" stroke="#5ccc60" fill="none" stroke-width="1" stroke-linecap="round" stroke-linejoin="round"/>
<path d="M150.50,47.82 L150.50,47.32 L151.01,46.31 L151.51,45.80 L152.52,45.30 L154.54,45.30 L155.55,45.80 L156.06,46.31 L156.56,47.32 L156.56,48.33 L156.06,49.34 L155.05,50.85 L150.00,55.90 L157.07,55.90 M162.69,45.30 L161.18,45.80 L160.17,47.32 L159.66,49.84 L159.66,51.36 L160.17,53.88 L161.18,55.40 L162.69,55.90 L163.70,55.90 L165.21,55.40 L166.22,53.88 L166.73,51.36 L166.73,49.84 L166.22,47.32 L165.21,45.80 L163.70,45.30 L162.69,45.30 M169.32,45.30 L176.39,55.90 M176.39,45.30 L169.32,55.90 M179.49,47.82 L179.49,47.32 L180.00,46.31 L180.50,45.80 L181.51,45.30 L183.53,45.30 L184.54,45.80 L185.04,46.31 L185.55,47.32 L185.55,48.33 L185.04,49.34 L184.03,50.85 L178.99,55.90 L186.05,55.90 M191.68,45.30 L190.16,45.80 L189.15,47.32 L188.65,49.84 L188.65,51.36 L189.15,53.88 L190.16,55.40 L191.68,55.90 L192.69,55.90 L194.20,55.40 L195.21,53.88 L195.71,51.36 L195.71,49.84 L195.21,47.32 L194.20,45.80 L192.69,45.30 L191.68,45.30 M198.81,51.36 L207.90,51.36" stroke="#5ccc60" fill="none" stroke-width="1" stroke-linecap="round" stroke-linejoin="round"/>
<path d="M215.70,45.30 L215.70,55.90 M215.70,45.30 L220.24,45.30 L221.76,45.80 L222.26,46.31 L222.77,47.32 L222.77,48.33 L222.26,49.34 L221.76,49.84 L220.24,50.35 M215.70,50.35 L220.24,50.35 L221.76,50.85 L222.26,51.36 L222.77,52.37 L222.77,53.88 L222.26,54.89 L221.76,55.40 L220.24,55.90 L215.70,55.90 M226.76,51.36 L235.84,51.36 M246.90,46.81 L245.89,45.80 L244.38,45.30 L242.36,45.30 L240.84,45.80 L239.83,46.81 L239.83,47.82 L240.34,48.83 L240.84,49.34 L241.85,49.84 L244.88,50.85 L245.89,51.36 L246.40,51.86 L246.90,52.87 L246.90,54.39 L245.89,55.40 L244.38,55.90 L242.36,55.90 L240.84,55.40 L239.83,54.39" stroke="#5ccc60" fill="none" stroke-width="1" stroke-linecap="round" stroke-linejoin="round"/>
</svg></body></html>
